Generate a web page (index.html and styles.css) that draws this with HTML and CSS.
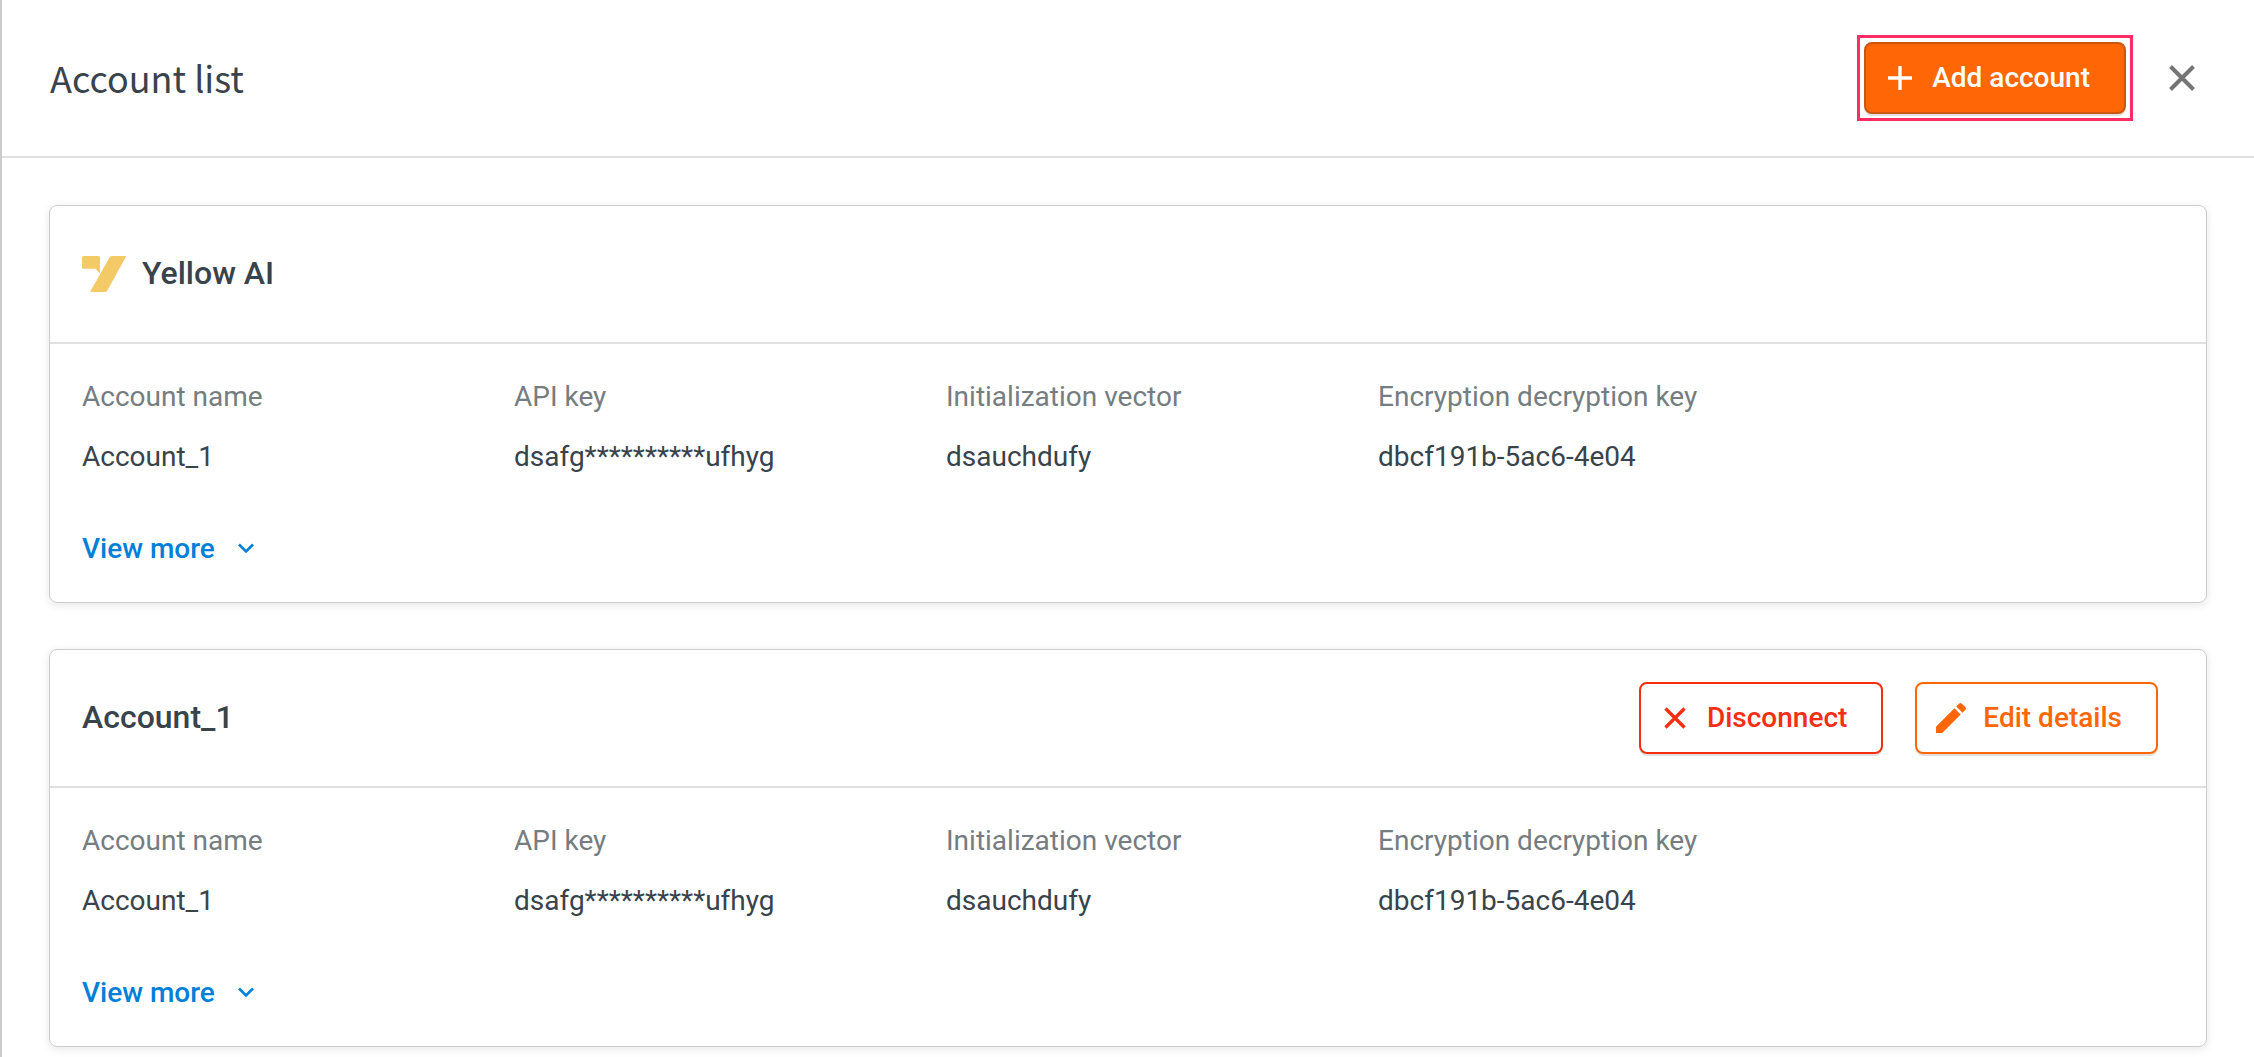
FILE: index.html
```html
<!DOCTYPE html>
<html lang="en">
<head>
    <meta charset="UTF-8"/>
    <title>Account list</title>
    <link rel="stylesheet" href="styles.css">
</head>
<body>
<div class="panel">
    <header class="panel-header">
        <h1>Account list</h1>
        <div class="highlight">
            <button class="btn btn__primary" type="button">
                <svg class="icon" viewBox="0 0 32 32" aria-hidden="true">
                    <path d="M16 4v24M4 16h24" fill="none" stroke="currentColor" stroke-width="3.4"/>
                </svg>
                Add account
            </button>
        </div>
        <button class="close" type="button" aria-label="Close">
            <svg viewBox="0 0 48 48" aria-hidden="true">
                <path d="M12.5 12.5l23 23M35.5 12.5l-23 23" fill="none" stroke="currentColor" stroke-width="4"/>
            </svg>
        </button>
    </header>

    <main class="panel-body">
        <!-- connected product -->
        <section class="card">
            <div class="card-header">
                <svg class="logo" viewBox="0 0 44 36" aria-hidden="true">
                    <path d="M1.5 0H16.500q1.500 0 1.500 1.500V17.500L13.500 12.800H1.500Q0 12.800 0 11.300V1.500Q0 0 1.500 0z"/>
                    <path d="M30 0H43.200Q44.300 0 43.700 1.200L25.300 34.600Q24.600 36 23.200 36H9Q8 36 8.600 34.900L27.500 1.500Q28.400 0 30 0z"/>
                </svg>
                <h2>Yellow AI</h2>
            </div>
            <dl class="details">
                <div class="detail">
                    <dt>Account name</dt>
                    <dd>Account_1</dd>
                </div>
                <div class="detail">
                    <dt>API key</dt>
                    <dd>dsafg**********ufhyg</dd>
                </div>
                <div class="detail">
                    <dt>Initialization vector</dt>
                    <dd>dsauchdufy</dd>
                </div>
                <div class="detail">
                    <dt>Encryption decryption key</dt>
                    <dd>dbcf191b-5ac6-4e04</dd>
                </div>
            </dl>
            <button class="view-more" type="button">
                View more
                <svg class="chevron" viewBox="0 0 24 24" aria-hidden="true">
                    <path d="M5 7.500l7 7 7-7" fill="none" stroke="currentColor" stroke-width="2.6"/>
                </svg>
            </button>
        </section>

        <!-- account -->
        <section class="card">
            <div class="card-header">
                <h2>Account_1</h2>
                <div class="actions">
                    <button class="btn btn__danger" type="button">
                        <svg class="icon" viewBox="0 0 32 32" aria-hidden="true">
                            <path d="M6.500 6.500l19 19M25.500 6.500l-19 19" fill="none" stroke="currentColor" stroke-width="3.4"/>
                        </svg>
                        Disconnect
                    </button>
                    <button class="btn btn__outline" type="button">
                        <svg class="icon" viewBox="0 0 32 32" aria-hidden="true">
                            <path d="M1 24.750V31h6.250L25.700 12.550l-6.250-6.250zM30.500 7.700a1.700 1.700 0 0 0 0-2.350l-3.900-3.900a1.700 1.700 0 0 0-2.350 0l-3.050 3.050 6.250 6.250z" fill="currentColor"/>
                        </svg>
                        Edit details
                    </button>
                </div>
            </div>
            <dl class="details">
                <div class="detail">
                    <dt>Account name</dt>
                    <dd>Account_1</dd>
                </div>
                <div class="detail">
                    <dt>API key</dt>
                    <dd>dsafg**********ufhyg</dd>
                </div>
                <div class="detail">
                    <dt>Initialization vector</dt>
                    <dd>dsauchdufy</dd>
                </div>
                <div class="detail">
                    <dt>Encryption decryption key</dt>
                    <dd>dbcf191b-5ac6-4e04</dd>
                </div>
            </dl>
            <button class="view-more" type="button">
                View more
                <svg class="chevron" viewBox="0 0 24 24" aria-hidden="true">
                    <path d="M5 7.500l7 7 7-7" fill="none" stroke="currentColor" stroke-width="2.6"/>
                </svg>
            </button>
        </section>
    </main>
</div>
</body>
</html>
```

FILE: styles.css
```css
* {
    box-sizing: border-box;
}

body {
    margin: 0;
    background-color: #fff;
    color: #39434b;
    font-family: Roboto, sans-serif;
    font-size: 28px;
    line-height: 40px;
}

h1, h2, dl, dd {
    margin: 0;
}

h1, h2 {
    padding-bottom: 3px;
}

button {
    margin: 0;
    background: none;
    border: none;
    font: inherit;
    font-weight: 500;
    cursor: pointer;
}

.panel {
    min-height: 100vh;
    border-left: 2px solid #ccc;
}

.panel-header {
    display: flex;
    align-items: center;
    height: 158px;
    padding: 0 48px;
    border-bottom: 2px solid #e0e0e0;
}

.panel-header h1 {
    flex: 1;
    font-family: "Noto Sans CJK JP", sans-serif;
    font-size: 36px;
    font-weight: 400;
}

.highlight {
    padding: 4px;
    border: 3px solid #ff2d64;
}

.btn {
    display: flex;
    align-items: center;
    gap: 16px;
    height: 72px;
    padding: 0 34px 0 18px;
    border: 2px solid currentColor;
    border-radius: 8px;
    box-shadow: 0 2px 0 rgba(0, 0, 0, 0.12);
    white-space: nowrap;
}

.btn__primary {
    background-color: #ff6706;
    border-color: #cc5610;
    color: #fff;
}

.btn__danger {
    color: #f62e11;
}

.btn__outline {
    color: #ff6706;
}

.icon {
    width: 32px;
    height: 32px;
}

.close {
    width: 48px;
    height: 48px;
    margin-left: 25px;
    padding: 0;
    color: #757575;
}

.close svg {
    display: block;
}

.panel-body {
    display: flex;
    flex-direction: column;
    gap: 46px;
    padding: 47px 47px 10px;
}

.card {
    padding-bottom: 33px;
    border: 1px solid #ccc;
    border-radius: 8px;
    box-shadow: 0 2px 8px rgba(0, 0, 0, 0.1);
}

.card-header {
    display: flex;
    align-items: center;
    gap: 16px;
    height: 138px;
    padding: 0 48px 0 32px;
    border-bottom: 2px solid #e0e0e0;
}

.card-header h2 {
    font-size: 32px;
    font-weight: 500;
}

.logo {
    width: 44px;
    height: 36px;
    fill: #f3ca65;
}

.actions {
    display: flex;
    gap: 32px;
    margin-left: auto;
}

.details {
    display: grid;
    grid-template-columns: repeat(5, 1fr);
    column-gap: 4px;
    padding: 33px 0 52px;
}

.detail {
    display: flex;
    flex-direction: column;
    gap: 20px;
    padding-left: 32px;
    white-space: nowrap;
}

.detail dt {
    color: #757d81;
}

.view-more {
    display: flex;
    align-items: center;
    gap: 19px;
    padding: 0 32px;
    color: #007fd9;
}

.chevron {
    width: 24px;
    height: 24px;
}
```
